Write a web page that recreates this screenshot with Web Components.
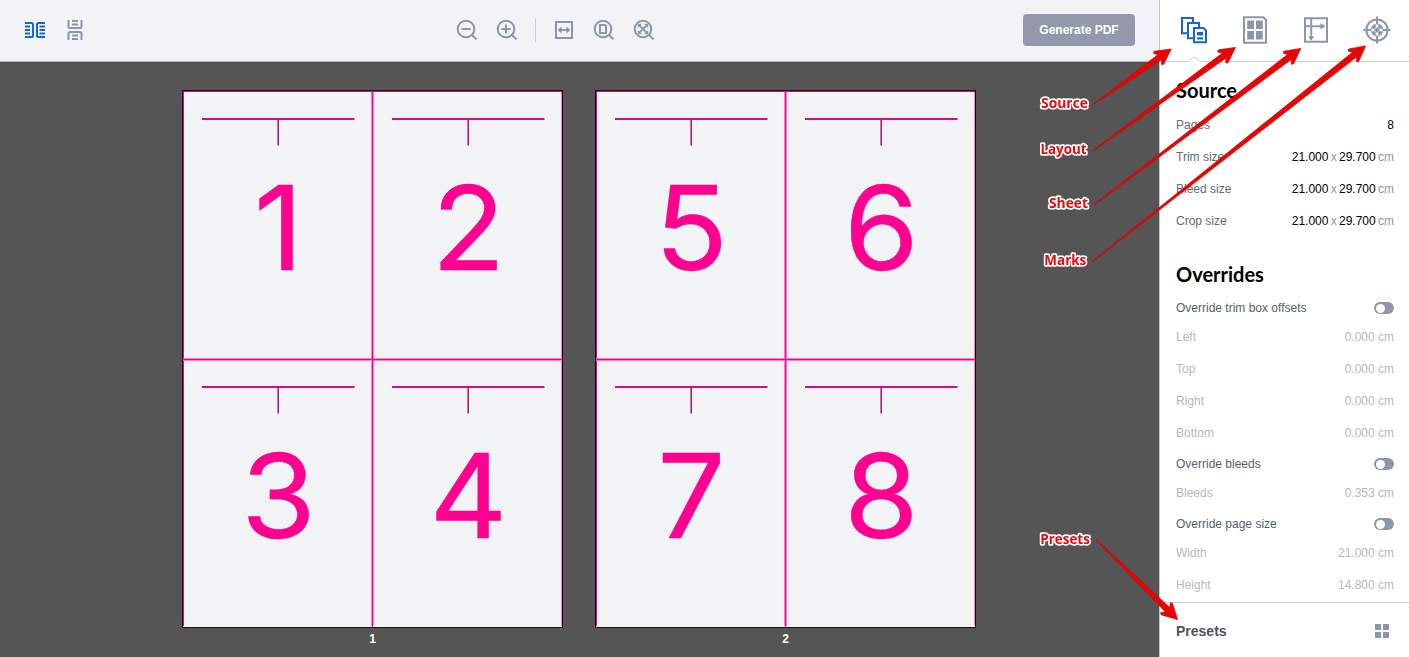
<!DOCTYPE html>
<html lang="en">
<head>
  <meta charset="UTF-8">
  <title>Imposition</title>
  <style>
    html, body {
      margin: 0;
      height: 100%;
      overflow: hidden;
    }
    body {
      font-family: "Liberation Sans", Arial, sans-serif;
      font-size: 12px;
      color: #56606f;
    }
  </style>
</head>
<body>
  <imposition-app></imposition-app>

  <script>
    const icons = {
      spreads: { w: 20, h: 20, body: '<path d="M0 2.9H6.4Q8 2.9 8 4.5V15.5Q8 17.1 6.4 17.1H0M0 6.6H5M0 10H5M0 13.4H5M20 2.9H13.6Q12 2.9 12 4.5V15.5Q12 17.1 13.6 17.1H20M20 6.6H14.5M20 10H14.5M20 13.4H14.5" stroke-width="2"/>' },
      stacked: { w: 16, h: 20, body: '<path d="M1.5 0V6.4Q1.5 8 3.1 8H12.9Q14.5 8 14.5 6.4V0M5 1H11M5 4.4H11M1.5 20V13.6Q1.5 12 3.1 12H12.9Q14.5 12 14.5 13.6V20M5 15.6H11M5 19H11" stroke-width="2"/>' },
      zoomOut: { w: 22, h: 22, body: '<circle cx="10" cy="10" r="8.3"/><path d="M15.8 15.8L20.4 20.4M5.6 10H14.6"/>' },
      zoomIn: { w: 22, h: 22, body: '<circle cx="10" cy="10" r="8.3"/><path d="M15.8 15.8L20.4 20.4M5.4 10H14.6M10 5.4V14.6"/>' },
      fitWidth: { w: 22, h: 22, body: '<path d="M3 3H19V19H3ZM7 11H15"/><path d="M4.7 11L8.6 7.6V14.4ZM17.3 11L13.4 7.6V14.4Z" fill="currentColor" stroke="none"/>' },
      fitPage: { w: 22, h: 22, body: '<circle cx="10" cy="10" r="8.3"/><path d="M15.8 15.8L20.4 20.4M7 6H12L13 7V14H7Z"/>' },
      fitAll: { w: 22, h: 22, body: '<circle cx="10" cy="10" r="8.3"/><path d="M15.8 15.8L20.4 20.4"/><path d="M6 6L14 14M14 6L6 14" stroke-width="1.8"/><path d="M4.8 4.8H9L4.8 9ZM15.2 4.8V9L11 4.8ZM4.8 15.2V11L9 15.2ZM15.2 15.2H11L15.2 11Z" fill="currentColor" stroke="none"/>' },
      source: { w: 28, h: 28, body: '<path d="M8 17.2H2V2H13V6.5M14 22.2H8V7H19V12M14 12H23.5L26 14.5V26.3H14Z"/><path d="M17 16H23V19.5H17ZM17 21.3H23V23.6H17Z" fill="currentColor" stroke="none"/>' },
      layout: { w: 28, h: 28, body: '<path d="M3 1.2H22.3L25 4V26.8H3Z"/><path d="M6.2 4.4H13V12.9H6.2ZM15 4.4H21.8V12.9H15ZM6.2 15.1H13V23.6H6.2ZM15 15.1H21.8V23.6H15Z" fill="currentColor" stroke="none"/>' },
      sheet: { w: 28, h: 28, body: '<path d="M3 2.2H25V25.8H3ZM9.2 2V22M3 10.2H20"/><path d="M6 20.2H12.4L9.2 24.8ZM18.5 7V13.4L23.6 10.2Z" fill="currentColor" stroke="none"/>' },
      marks: { w: 28, h: 28, body: '<circle cx="14" cy="14" r="10.6"/><circle cx="14" cy="14" r="6.4" fill="currentColor" stroke="none"/><path d="M14 7V21M7 14H21" stroke="#fff" stroke-width="2.6"/><path d="M14 .4V8.4M14 19.6V27.6M.4 14H8.4M19.6 14H27.6M14 11.5V16.5M11.5 14H16.5"/>' },
      presets: { w: 14, h: 14, body: '<path d="M0 0H6V6H0ZM8 0H14V6H8ZM0 8H6V14H0ZM8 8H14V14H8Z" fill="currentColor" stroke="none"/>' }
    }

    class AppIcon extends HTMLElement {
      connectedCallback() {
        const icon = icons[this.getAttribute('name')]
        this.attachShadow({ mode: 'open' }).innerHTML = `
          <style>
            :host { display: block; flex: none; }
            svg { display: block; }
          </style>
          <svg width="${icon.w}" height="${icon.h}" viewBox="0 0 ${icon.w} ${icon.h}" fill="none" stroke="currentColor" stroke-width="2">${icon.body}</svg>
        `
      }
    }

    class TopToolbar extends HTMLElement {
      connectedCallback() {
        this.attachShadow({ mode: 'open' }).innerHTML = `
          <style>
            :host {
              display: grid;
              grid-template-columns: 431px 1fr auto;
              align-items: center;
              box-sizing: border-box;
              height: 62px;
              padding: 0 24px 1px 25px;
              background: #f1f3f7;
              border-bottom: 1px solid #b5b8b8;
              color: #8d96a9;
            }
            .views, .zoom { display: flex; align-items: center; }
            .views { gap: 22px; }
            .views app-icon[name="spreads"] { color: #1467d2; }
            .zoom { gap: 18px; }
            .divider { width: 1px; height: 24px; margin: 0 -1px; background: #c9cdd5; }
            button {
              width: 112px;
              height: 32px;
              padding: 0;
              border: 0;
              border-radius: 4px;
              background: #9299aa;
              color: #fff;
              font: bold 12px "Liberation Sans", Arial, sans-serif;
            }
          </style>
          <div class="views">
            <app-icon name="spreads"></app-icon>
            <app-icon name="stacked"></app-icon>
          </div>
          <div class="zoom">
            <app-icon name="zoomOut"></app-icon>
            <app-icon name="zoomIn"></app-icon>
            <div class="divider"></div>
            <app-icon name="fitWidth"></app-icon>
            <app-icon name="fitPage"></app-icon>
            <app-icon name="fitAll"></app-icon>
          </div>
          <button>Generate PDF</button>
        `
      }
    }

    class PageCell extends HTMLElement {
      connectedCallback() {
        this.attachShadow({ mode: 'open' }).innerHTML = `
          <style>
            :host { display: block; background: #f1f3f5; box-sizing: border-box; overflow: hidden; }
            svg { display: block; overflow: visible; margin-top: var(--art-shift, -1px); }
            text {
              font: 400 116.5px Inter, sans-serif;
              fill: #ff0090;
              stroke: #f5008a;
              stroke-width: .5;
              stroke-linejoin: round;
              text-anchor: middle;
            }
          </style>
          <svg width="189" height="266">
            <path d="M95.2 28V54.5" stroke="#a8116b" stroke-width="1.5"/>
            <path d="M19 28H171.5" stroke="#dc0a80" stroke-width="1.8"/>
            <text transform="translate(95.4 179) scale(1.035 1)">${this.getAttribute('number')}</text>
          </svg>
        `
      }
    }

    class PrintSheet extends HTMLElement {
      connectedCallback() {
        const first = Number(this.getAttribute('first'))
        const cells = [0, 1, 2, 3].map(i => `<page-cell number="${first + i}"></page-cell>`).join('')
        this.attachShadow({ mode: 'open' }).innerHTML = `
          <style>
            :host { display: flex; flex-direction: column; align-items: center; gap: 4px; }
            .sheet {
              display: grid;
              grid-template: 268px 267px / 189px 189px;
              gap: 1px;
              background: #ff0090;
              border: 1px solid #120a10;
            }
            page-cell { box-shadow: inset 1px 0 #ff7cc4, inset -1px 0 #ff7cc4; }
            page-cell:nth-child(odd) { box-shadow: inset 1px 0 #f0008a, inset -1px 0 #ff7cc4; }
            page-cell:nth-child(-n+2) { border-top: 1px solid #e8007f; border-bottom: 1px solid #ff7cc4; }
            page-cell:nth-child(n+3) { --art-shift: -2px; border-top: 1px solid #ff7cc4; border-bottom: 1px solid #fff; }
            .label { color: #fff; font-weight: bold; font-size: 12px; line-height: 14px; }
          </style>
          <div class="sheet">${cells}</div>
          <div class="label"><slot></slot></div>
        `
      }
    }

    class PanelTabs extends HTMLElement {
      connectedCallback() {
        this.attachShadow({ mode: 'open' }).innerHTML = `
          <style>
            :host {
              position: relative;
              display: flex;
              gap: 33px;
              align-items: center;
              box-sizing: border-box;
              height: 62px;
              padding: 0 0 1px 20px;
              border-bottom: 1px solid #cbcdd0;
              color: #8d96a9;
            }
            app-icon[name="source"] { color: #1467d2; }
            .pointer { position: absolute; left: 28px; bottom: -1px; }
          </style>
          <app-icon name="source"></app-icon>
          <app-icon name="layout"></app-icon>
          <app-icon name="sheet"></app-icon>
          <app-icon name="marks"></app-icon>
          <svg class="pointer" width="12" height="6"><path d="M0 5.5L6 .8L12 5.5V6H0Z" fill="#fff"/><path d="M0 5.5L6 .8L12 5.5" fill="none" stroke="#cbcdd0"/></svg>
        `
      }
    }

    class PanelSection extends HTMLElement {
      connectedCallback() {
        this.attachShadow({ mode: 'open' }).innerHTML = `
          <style>
            :host { display: block; }
            h2 {
              margin: 0;
              height: var(--heading-height, 38px);
              font: 700 20px/var(--heading-height, 38px) Lato, sans-serif;
              color: #000;
            }
          </style>
          <h2>${this.getAttribute('heading')}</h2>
          <slot></slot>
        `
      }
    }

    class FieldRow extends HTMLElement {
      connectedCallback() {
        this.attachShadow({ mode: 'open' }).innerHTML = `
          <style>
            :host {
              display: flex;
              align-items: center;
              justify-content: space-between;
              height: 32px;
              color: #626a78;
            }
            :host([disabled]) { color: #b5b8be; }
            .value { white-space: pre; }
          </style>
          <span>${this.getAttribute('label')}</span>
          <span class="value"><slot></slot></span>
        `
      }
    }

    // width x height pair with a muted unit
    class SizeValue extends HTMLElement {
      connectedCallback() {
        this.attachShadow({ mode: 'open' }).innerHTML = `
          <style>
            :host { display: flex; gap: 2.3px; color: #000; }
            .muted { color: #8d94a5; }
          </style>
          <span>${this.getAttribute('w')}</span><span class="muted">x</span><span>${this.getAttribute('h')}</span><span class="muted">cm</span>
        `
      }
    }

    class ToggleRow extends HTMLElement {
      connectedCallback() {
        this.attachShadow({ mode: 'open' }).innerHTML = `
          <style>
            :host {
              display: flex;
              align-items: center;
              justify-content: space-between;
              box-sizing: border-box;
              height: 28px;
              padding-top: 2px;
            }
            .track {
              box-sizing: border-box;
              width: 20px;
              height: 12px;
              padding: 1.5px;
              border-radius: 6px;
              background: #8d96a9;
            }
            .knob { width: 9px; height: 9px; border-radius: 50%; background: #fff; }
          </style>
          <span><slot></slot></span>
          <div class="track"><div class="knob"></div></div>
        `
      }
    }

    class SidePanel extends HTMLElement {
      connectedCallback() {
        this.attachShadow({ mode: 'open' }).innerHTML = `
          <style>
            :host { display: flex; flex-direction: column; background: #fff; border-left: 1px solid #c6c8cc; }
            .content { flex: 1; padding: 10px 15px 0 16px; }
            panel-section:first-child { --heading-height: 37px; margin-bottom: 18px; }
            .count { color: #000; }
            footer {
              display: flex;
              align-items: center;
              justify-content: space-between;
              box-sizing: border-box;
              height: 55px;
              padding: 2px 20px 0 16px;
              border-top: 1px solid #c9cbcf;
              font-weight: bold;
              font-size: 14px;
              color: #4b5363;
            }
            footer app-icon { color: #8d96a9; }
          </style>
          <panel-tabs></panel-tabs>
          <div class="content">
            <panel-section heading="Source">
              <field-row label="Pages"><span class="count">8</span></field-row>
              <field-row label="Trim size"><size-value w="21.000" h="29.700"></size-value></field-row>
              <field-row label="Bleed size"><size-value w="21.000" h="29.700"></size-value></field-row>
              <field-row label="Crop size"><size-value w="21.000" h="29.700"></size-value></field-row>
            </panel-section>
            <panel-section heading="Overrides">
              <toggle-row>Override trim box offsets</toggle-row>
              <field-row disabled label="Left">0.000 cm</field-row>
              <field-row disabled label="Top">0.000 cm</field-row>
              <field-row disabled label="Right">0.000 cm</field-row>
              <field-row disabled label="Bottom">0.000 cm</field-row>
              <toggle-row>Override bleeds</toggle-row>
              <field-row disabled label="Bleeds">0.353 cm</field-row>
              <toggle-row>Override page size</toggle-row>
              <field-row disabled label="Width">21.000 cm</field-row>
              <field-row disabled label="Height">14.800 cm</field-row>
            </panel-section>
          </div>
          <footer>Presets<app-icon name="presets"></app-icon></footer>
        `
      }
    }

    // Tapered red arrows with their captions, drawn over the whole window
    class CalloutLayer extends HTMLElement {
      connectedCallback() {
        const callouts = [
          { text: 'Source', x: 1041, y: 108.4, w: 47, from: [1094, 104], to: [1171.3, 49] },
          { text: 'Layout', x: 1040.5, y: 154.4, w: 46, from: [1093, 150.7], to: [1235.5, 47.4] },
          { text: 'Sheet', x: 1049, y: 208.4, w: 39, from: [1094.5, 204.5], to: [1300.8, 48.4] },
          { text: 'Marks', x: 1044.3, y: 265.4, w: 42, from: [1092.5, 261.5], to: [1365.6, 45.9] },
          { text: 'Presets', x: 1040.3, y: 544.4, w: 49.5, from: [1096, 539.5], to: [1177.6, 619.6] }
        ]
        this.attachShadow({ mode: 'open' }).innerHTML = `
          <style>
            :host { position: absolute; inset: 0; pointer-events: none; }
            svg { display: block; filter: drop-shadow(0 0 .6px rgba(0, 0, 0, .3)); }
            text {
              font: 700 13.5px "Open Sans", "Noto Sans", sans-serif;
              fill: #e60a0e;
              stroke: #fff;
              stroke-width: 3.4;
              stroke-linejoin: round;
              paint-order: stroke;
            }
            polygon { fill: #ea0303; stroke: #e00303; stroke-width: .6; stroke-linejoin: round; }
          </style>
          <svg width="1409" height="657">
            ${callouts.map(c => `<polygon points="${this.arrow(c.from, c.to)}"/><text x="${c.x}" y="${c.y}" textLength="${c.w}" lengthAdjust="spacingAndGlyphs">${c.text}</text>`).join('')}
          </svg>
        `
      }

      arrow([x1, y1], [x2, y2]) {
        const len = Math.hypot(x2 - x1, y2 - y1)
        const ux = (x2 - x1) / len
        const uy = (y2 - y1) / len
        // back = distance behind the tip, side = distance from the axis
        const at = (back, side) => `${(x2 - ux * back - uy * side).toFixed(1)},${(y2 - uy * back + ux * side).toFixed(1)}`
        return [at(len, .3), at(14.2, 3.1), at(17, 7), at(15.2, 8), at(0, 0), at(15.2, -8), at(17, -7), at(14.2, -3.1), at(len, -.3)].join(' ')
      }
    }

    class ImpositionApp extends HTMLElement {
      connectedCallback() {
        this.attachShadow({ mode: 'open' }).innerHTML = `
          <style>
            :host {
              position: relative;
              display: grid;
              grid-template-columns: 1fr 250px;
              height: 100vh;
              overflow: hidden;
            }
            main { display: flex; flex-direction: column; }
            .canvas {
              flex: 1;
              display: flex;
              align-items: flex-start;
              gap: 32px;
              padding: 28px 0 0 182px;
              background: #555;
            }
          </style>
          <main>
            <top-toolbar></top-toolbar>
            <div class="canvas">
              <print-sheet first="1">1</print-sheet>
              <print-sheet first="5">2</print-sheet>
            </div>
          </main>
          <side-panel></side-panel>
          <callout-layer></callout-layer>
        `
      }
    }

    customElements.define('app-icon', AppIcon)
    customElements.define('top-toolbar', TopToolbar)
    customElements.define('page-cell', PageCell)
    customElements.define('print-sheet', PrintSheet)
    customElements.define('panel-tabs', PanelTabs)
    customElements.define('panel-section', PanelSection)
    customElements.define('field-row', FieldRow)
    customElements.define('size-value', SizeValue)
    customElements.define('toggle-row', ToggleRow)
    customElements.define('side-panel', SidePanel)
    customElements.define('callout-layer', CalloutLayer)
    customElements.define('imposition-app', ImpositionApp)
  </script>
</body>
</html>
